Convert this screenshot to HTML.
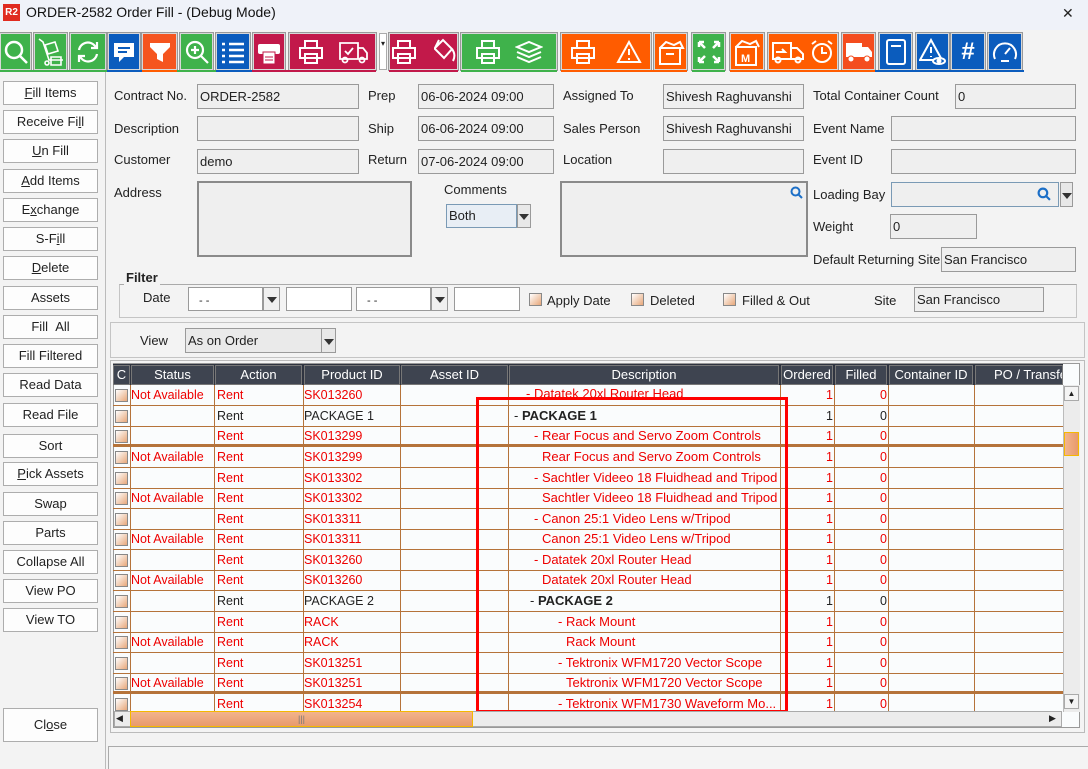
<!DOCTYPE html>
<html><head><meta charset="utf-8"><style>
*{margin:0;padding:0;box-sizing:border-box}
body{width:1088px;height:769px;overflow:hidden;background:#f3f3f3;font-family:"Liberation Sans",Arial,sans-serif;font-size:13px;color:#222;position:relative}
.a{position:absolute}
.tb{position:absolute;top:33px;height:37px;border:1px solid #d8d8d8;outline:1px solid #999;display:flex;align-items:center;justify-content:center;gap:8px}
.g{background:#3fb24b}.b{background:#0b5cbd}.o{background:#ff5c00}.r{background:#c2194a}
.lb{position:absolute;left:3px;width:95px;height:24px;border:1px solid #adadad;background:#fdfdfd;text-align:center;line-height:22px;font-size:13px}
.lbl{position:absolute;font-size:13px;color:#222}
.f{position:absolute;background:#efefef;border:1px solid #9a9a9a;padding-left:2px;line-height:24px;font-size:13px}
.w{position:absolute;background:#fff;border:1px solid #9a9a9a}
.cb{position:absolute;width:13px;height:13px;border:1px solid #888;background:linear-gradient(135deg,#fff,#e7a77a)}
.dd{position:absolute;background:#e8e8e8;border:1px solid #9a9a9a}
.dd:after{content:"";position:absolute;left:50%;top:50%;margin:-2px 0 0 -5px;border:5px solid transparent;border-top:6px solid #333;border-bottom:0}
.hd{position:absolute;top:365px;height:20px;background:#3e4450;color:#fff;border:1px solid #777;text-align:center;line-height:18px;font-size:13px}
.row{position:absolute;left:113px;width:950px;height:21px;border-bottom:1px solid #b5733a;font-size:12.5px;color:#e00}
.row span{position:absolute;top:3px;white-space:nowrap}
.row span.d{font-size:13px;top:2px}
.vl{position:absolute;top:385px;width:1px;height:327px;background:#b5733a}
svg{display:block}
</style></head><body>
<!-- title -->
<div class="a" style="left:0;top:0;width:1088px;height:30px;background:#eff2f9"></div>
<div class="a" style="left:3px;top:4px;width:17px;height:17px;background:#e02b20;color:#fff;font-size:10px;font-weight:bold;line-height:17px;text-align:center">R2</div>
<div class="a" style="left:26px;top:4px;font-size:14px;color:#111">ORDER-2582 Order Fill - (Debug Mode)</div>
<div class="a" style="left:1062px;top:5px;font-size:14px;color:#222">✕</div>

<!-- toolbar -->
<div class="tb g" style="left:0;width:31px"><svg width="26" height="26" viewBox="0 0 26 26" fill="none" stroke="#fff" stroke-width="2.5"><circle cx="11" cy="11" r="8"/><path d="M17 17l7 7"/></svg></div>
<div class="tb g" style="left:34px;width:33px"><svg width="28" height="30" viewBox="0 0 28 30" fill="none" stroke="#fff" stroke-width="1.6"><path d="M2 2l4 3 6 18h14M8 8l10-3 3 9-10 3zM14 20h10v8H14z"/><circle cx="10" cy="26" r="2"/></svg></div>
<div class="tb g" style="left:70px;width:36px"><svg width="26" height="26" viewBox="0 0 26 26" fill="none" stroke="#fff" stroke-width="2.2"><path d="M4 11a9 9 0 0 1 16-4l2 2M22 15a9 9 0 0 1-16 4l-2-2M22 3v6h-6M4 23v-6h6"/></svg></div>
<div class="tb b" style="left:108px;width:32px"><svg width="24" height="24" viewBox="0 0 24 24"><path d="M2 3h20v14H12l-5 5v-5H2z" fill="#fff"/><path d="M6 8h12M6 12h9" stroke="#0b5cbd" stroke-width="2"/></svg></div>
<div class="tb o" style="left:142px;width:35px;background:#f5551f"><svg width="24" height="24" viewBox="0 0 24 24"><path d="M2 3h20v4l-7 7v8l-6-3v-5L2 7z" fill="#fff"/></svg></div>
<div class="tb g" style="left:180px;width:33px"><svg width="26" height="26" viewBox="0 0 26 26" fill="none" stroke="#fff" stroke-width="2.2"><circle cx="11" cy="11" r="8"/><path d="M17 17l7 7M11 7v8M7 11h8"/></svg></div>
<div class="tb b" style="left:216px;width:34px"><svg width="26" height="24" viewBox="0 0 26 24" stroke="#fff" stroke-width="2.5"><path d="M2 4h3M9 4h15M2 10h3M9 10h15M2 16h3M9 16h15M2 22h3M9 22h15"/></svg></div>
<div class="tb r" style="left:253px;width:32px"><svg width="24" height="28" viewBox="0 0 24 28"><rect x="1" y="6" width="22" height="10" rx="2" fill="#fff"/><rect x="6" y="14" width="12" height="12" fill="#fff" stroke="#c2194a"/><path d="M8 19h8M8 22h8" stroke="#c2194a"/></svg></div>
<div class="tb r" style="left:289px;width:87px;gap:14px"><svg width="26" height="26" viewBox="0 0 26 26" fill="none" stroke="#fff" stroke-width="2"><path d="M7 9V2h12v7M2 9h22v10H2zM7 15h12v9H7z"/></svg><svg width="30" height="26" viewBox="0 0 30 26" fill="none" stroke="#fff" stroke-width="1.8"><path d="M2 4h18v16H2zM20 9h5l4 5v6h-9M7 12l3 3 5-6"/><circle cx="7" cy="21" r="2.5"/><circle cx="24" cy="21" r="2.5"/></svg></div>
<div class="a" style="left:379px;top:33px;width:8px;height:37px;background:#fff;border:1px solid #aaa;font-size:8px;text-align:center;line-height:20px">▾</div>
<div class="tb r" style="left:389px;width:69px;gap:14px"><svg width="26" height="26" viewBox="0 0 26 26" fill="none" stroke="#fff" stroke-width="2"><path d="M7 9V2h12v7M2 9h22v10H2zM7 15h12v9H7z"/></svg><svg width="26" height="28" viewBox="0 0 26 28" fill="none" stroke="#fff" stroke-width="2"><path d="M4 10l8-8 9 9-8 9-9-9zM8 2l-4 8M21 11c3 4 3 8 1 12"/></svg></div>
<div class="tb g" style="left:461px;width:96px;gap:14px"><svg width="26" height="26" viewBox="0 0 26 26" fill="none" stroke="#fff" stroke-width="2"><path d="M7 9V2h12v7M2 9h22v10H2zM7 15h12v9H7z"/></svg><svg width="28" height="26" viewBox="0 0 28 26" fill="none" stroke="#fff" stroke-width="2"><path d="M2 8l12-5 12 5-12 5zM2 13l12 5 12-5M2 18l12 5 12-5"/></svg></div>
<div class="tb o" style="left:561px;width:90px;gap:20px"><svg width="26" height="26" viewBox="0 0 26 26" fill="none" stroke="#fff" stroke-width="2"><path d="M7 9V2h12v7M2 9h22v10H2zM7 15h12v9H7z"/></svg><svg width="26" height="24" viewBox="0 0 26 24" fill="none" stroke="#fff" stroke-width="2"><path d="M13 2l11 20H2zM13 9v6M13 18v2"/></svg></div>
<div class="tb o" style="left:654px;width:33px"><svg width="28" height="28" viewBox="0 0 28 28" fill="none" stroke="#fff" stroke-width="2"><path d="M3 10h20v16H3zM3 10l6-6 8 3 6-3 3 6-3 0M9 16h8"/></svg></div>
<div class="tb g" style="left:692px;width:33px"><svg width="24" height="24" viewBox="0 0 24 24" fill="none" stroke="#fff" stroke-width="2.5"><path d="M2 2l6 6M22 2l-6 6M2 22l6-6M22 22l-6-6M2 2h5M2 2v5M22 2h-5M22 2v5M2 22h5M2 22v-5M22 22h-5M22 22v-5"/></svg></div>
<div class="tb o" style="left:730px;width:34px"><svg width="28" height="30" viewBox="0 0 28 30" fill="none" stroke="#fff" stroke-width="2"><path d="M3 10h20v18H3zM3 10l6-6 8 3 6-3 3 6"/><text x="8" y="25" fill="#fff" stroke="none" font-size="11" font-weight="bold" font-family="Liberation Sans">M</text></svg></div>
<div class="tb o" style="left:768px;width:70px;gap:4px"><svg width="34" height="26" viewBox="0 0 34 26" fill="none" stroke="#fff" stroke-width="2"><path d="M2 4h18v16H2zM20 9h6l6 6v5H20M5 13h9l-3-3"/><circle cx="7" cy="21" r="2.5"/><circle cx="27" cy="21" r="2.5"/></svg><svg width="26" height="26" viewBox="0 0 26 26" fill="none" stroke="#fff" stroke-width="2"><circle cx="13" cy="14" r="9"/><path d="M13 8v6h5M3 5l4-3M23 5l-4-3"/></svg></div>
<div class="tb" style="left:842px;width:33px;background:#f44d1e"><svg width="28" height="22" viewBox="0 0 28 22"><path d="M1 2h16v14H1zM17 6h6l4 5v5H17z" fill="#fff"/><circle cx="6" cy="18" r="3" fill="#fff" stroke="#f44d1e"/><circle cx="22" cy="18" r="3" fill="#fff" stroke="#f44d1e"/></svg></div>
<div class="tb b" style="left:879px;width:33px"><svg width="22" height="28" viewBox="0 0 22 28" fill="none" stroke="#fff" stroke-width="2"><rect x="2" y="2" width="18" height="24" rx="2"/><path d="M6 8h10"/></svg></div>
<div class="tb b" style="left:916px;width:33px"><svg width="28" height="28" viewBox="0 0 28 28" fill="none" stroke="#fff" stroke-width="2"><path d="M12 2l11 20H1zM12 9v6M12 18v1"/><ellipse cx="20" cy="23" rx="6" ry="3" fill="#0b5cbd"/><circle cx="20" cy="23" r="1.5" fill="#fff"/></svg></div>
<div class="tb b" style="left:951px;width:34px;color:#fff;font-size:24px;font-weight:bold">#</div>
<div class="tb b" style="left:988px;width:34px"><svg width="28" height="26" viewBox="0 0 28 26" fill="none" stroke="#fff" stroke-width="2"><path d="M4 20a11 11 0 1 1 20 0M14 15l5-6M10 22h8"/></svg></div>
<div class="a" style="left:0;top:70px;width:1024px;height:2px;background:linear-gradient(90deg,#3fb24b 0 107px,#0b5cbd 107px 142px,#ff5c00 142px 177px,#3fb24b 177px 216px,#0b5cbd 216px 252px,#c2194a 252px 376px,transparent 376px 389px,#c2194a 389px 458px,transparent 458px 461px,#3fb24b 461px 557px,transparent 557px 561px,#ff5c00 561px 687px,transparent 687px 692px,#3fb24b 692px 725px,transparent 725px 730px,#ff5c00 730px 875px,#0b5cbd 875px 1024px)"></div>

<!-- left buttons -->
<div class="a" style="left:105px;top:72px;width:1px;height:697px;background:#bbb"></div>
<div class="lb" style="top:81px"><u>F</u>ill Items</div>
<div class="lb" style="top:110px">Receive Fi<u>l</u>l</div>
<div class="lb" style="top:139px"><u>U</u>n Fill</div>
<div class="lb" style="top:169px"><u>A</u>dd Items</div>
<div class="lb" style="top:198px">E<u>x</u>change</div>
<div class="lb" style="top:227px">S-F<u>i</u>ll</div>
<div class="lb" style="top:256px"><u>D</u>elete</div>
<div class="lb" style="top:286px">Assets</div>
<div class="lb" style="top:315px">Fill &nbsp;All</div>
<div class="lb" style="top:344px">Fill Filtered</div>
<div class="lb" style="top:373px">Read Data</div>
<div class="lb" style="top:403px">Read File</div>
<div class="lb" style="top:434px">Sort</div>
<div class="lb" style="top:462px"><u>P</u>ick Assets</div>
<div class="lb" style="top:492px">Swap</div>
<div class="lb" style="top:521px">Parts</div>
<div class="lb" style="top:550px">Collapse All</div>
<div class="lb" style="top:579px">View PO</div>
<div class="lb" style="top:608px">View TO</div>
<div class="lb" style="top:708px;height:34px;line-height:32px">Cl<u>o</u>se</div>

<!-- form -->
<div class="lbl" style="left:114px;top:88px">Contract No.</div>
<div class="f" style="left:197px;top:84px;width:162px;height:25px">ORDER-2582</div>
<div class="lbl" style="left:114px;top:121px">Description</div>
<div class="f" style="left:197px;top:116px;width:162px;height:25px"></div>
<div class="lbl" style="left:114px;top:152px">Customer</div>
<div class="f" style="left:197px;top:149px;width:162px;height:25px">demo</div>
<div class="lbl" style="left:114px;top:185px">Address</div>
<div class="f" style="left:197px;top:181px;width:215px;height:76px;border:2px solid #8a8a8a"></div>
<div class="lbl" style="left:368px;top:88px">Prep</div>
<div class="f" style="left:418px;top:84px;width:136px;height:25px">06-06-2024 09:00</div>
<div class="lbl" style="left:368px;top:121px">Ship</div>
<div class="f" style="left:418px;top:116px;width:136px;height:25px">06-06-2024 09:00</div>
<div class="lbl" style="left:368px;top:152px">Return</div>
<div class="f" style="left:418px;top:149px;width:136px;height:25px">07-06-2024 09:00</div>
<div class="lbl" style="left:444px;top:182px">Comments</div>
<div class="f" style="left:446px;top:204px;width:71px;height:24px;background:#e8eef5;border-color:#7a9ab5;line-height:22px">Both</div>
<div class="dd" style="left:517px;top:204px;width:14px;height:24px"></div>
<div class="f" style="left:560px;top:181px;width:248px;height:76px;border:2px solid #8a8a8a"></div>
<svg class="a" style="left:790px;top:186px" width="13" height="13" viewBox="0 0 13 13" fill="none" stroke="#1c6fc7" stroke-width="2"><circle cx="5.5" cy="5.5" r="4"/><path d="M8.5 8.5l3.5 3.5"/></svg>
<div class="lbl" style="left:563px;top:88px">Assigned To</div>
<div class="f" style="left:663px;top:84px;width:141px;height:25px">Shivesh Raghuvanshi</div>
<div class="lbl" style="left:563px;top:121px">Sales Person</div>
<div class="f" style="left:663px;top:116px;width:141px;height:25px">Shivesh Raghuvanshi</div>
<div class="lbl" style="left:563px;top:152px">Location</div>
<div class="f" style="left:663px;top:149px;width:141px;height:25px"></div>
<div class="lbl" style="left:813px;top:88px">Total Container Count</div>
<div class="f" style="left:955px;top:84px;width:121px;height:25px">0</div>
<div class="lbl" style="left:813px;top:121px">Event Name</div>
<div class="f" style="left:891px;top:116px;width:185px;height:25px"></div>
<div class="lbl" style="left:813px;top:152px">Event ID</div>
<div class="f" style="left:891px;top:149px;width:185px;height:25px"></div>
<div class="lbl" style="left:813px;top:187px">Loading Bay</div>
<div class="f" style="left:891px;top:182px;width:168px;height:25px;border-color:#7a9ab5"></div>
<svg class="a" style="left:1037px;top:187px" width="14" height="14" viewBox="0 0 13 13" fill="none" stroke="#1c6fc7" stroke-width="2"><circle cx="5.5" cy="5.5" r="4"/><path d="M8.5 8.5l3.5 3.5"/></svg>
<div class="dd" style="left:1060px;top:182px;width:13px;height:25px"></div>
<div class="lbl" style="left:813px;top:219px">Weight</div>
<div class="f" style="left:890px;top:214px;width:87px;height:25px">0</div>
<div class="lbl" style="left:813px;top:252px">Default Returning Site</div>
<div class="f" style="left:941px;top:247px;width:135px;height:25px">San Francisco</div>

<!-- filter -->
<div class="a" style="left:119px;top:284px;width:958px;height:34px;border:1px solid #c4c4c4;border-top:1px solid #aaa"></div>
<div class="a" style="left:124px;top:270px;padding:0 2px;background:#f3f3f3;font-weight:bold;font-size:13px">Filter</div>
<div class="lbl" style="left:143px;top:290px">Date</div>
<div class="w" style="left:188px;top:287px;width:75px;height:24px;padding:7px 0 0 10px;font-size:11px">- -</div>
<div class="dd" style="left:263px;top:287px;width:17px;height:24px;background:#f0f0f0"></div>
<div class="w" style="left:286px;top:287px;width:66px;height:24px"></div>
<div class="w" style="left:356px;top:287px;width:75px;height:24px;padding:7px 0 0 10px;font-size:11px">- -</div>
<div class="dd" style="left:431px;top:287px;width:17px;height:24px;background:#f0f0f0"></div>
<div class="w" style="left:454px;top:287px;width:66px;height:24px"></div>
<div class="cb" style="left:529px;top:293px"></div><div class="lbl" style="left:547px;top:293px">Apply Date</div>
<div class="cb" style="left:631px;top:293px"></div><div class="lbl" style="left:650px;top:293px">Deleted</div>
<div class="cb" style="left:723px;top:293px"></div><div class="lbl" style="left:742px;top:293px">Filled &amp; Out</div>
<div class="lbl" style="left:874px;top:293px">Site</div>
<div class="f" style="left:914px;top:287px;width:130px;height:25px">San Francisco</div>

<!-- view -->
<div class="a" style="left:110px;top:322px;width:975px;height:36px;border:1px solid #c4c4c4"></div>
<div class="lbl" style="left:140px;top:333px">View</div>
<div class="f" style="left:185px;top:328px;width:137px;height:25px;background:#eaeaea">As on Order</div>
<div class="dd" style="left:321px;top:328px;width:15px;height:25px"></div>

<!-- grid -->
<div class="a" style="left:110px;top:360px;width:975px;height:373px;border:1px solid #bbb;background:#f4f4f4"></div>
<div class="a" style="left:113px;top:363px;width:967px;height:365px;border:1px solid #999;background:#fafcfd"></div>
<div class="a" style="left:113px;top:364px;width:950px;height:21px;background:#2f3440"></div>
<div class="hd" style="left:113px;width:17px">C</div>
<div class="hd" style="left:131px;width:83px">Status</div>
<div class="hd" style="left:215px;width:87px">Action</div>
<div class="hd" style="left:304px;width:96px">Product ID</div>
<div class="hd" style="left:401px;width:107px">Asset ID</div>
<div class="hd" style="left:509px;width:270px">Description</div>
<div class="hd" style="left:781px;width:52px">Ordered</div>
<div class="hd" style="left:835px;width:52px">Filled</div>
<div class="hd" style="left:889px;width:84px">Container ID</div>
<div class="hd" style="left:975px;width:88px;text-align:left;padding-left:18px;overflow:hidden;white-space:nowrap">PO / Transfer</div>

<div class="vl" style="left:130px"></div><div class="vl" style="left:214px"></div><div class="vl" style="left:303px"></div><div class="vl" style="left:400px"></div><div class="vl" style="left:508px"></div><div class="vl" style="left:780px"></div><div class="vl" style="left:834px"></div><div class="vl" style="left:888px"></div><div class="vl" style="left:974px"></div>

<div class="row" style="top:385px"><div class="cb" style="left:2px;top:4px"></div><span style="left:18px">Not Available</span><span style="left:104px">Rent</span><span style="left:191px">SK013260</span><span class="d" style="left:413px;top:1px">- Datatek 20xl Router Head</span><span style="left:713px">1</span><span style="left:767px">0</span></div>
<div class="row" style="top:406px;color:#222"><div class="cb" style="left:2px;top:4px"></div><span style="left:104px">Rent</span><span style="left:191px">PACKAGE 1</span><span class="d" style="left:401px">- <b>PACKAGE 1</b></span><span style="left:713px">1</span><span style="left:767px">0</span></div>
<div class="row" style="top:426px;border-bottom:3px solid #b5733a"><div class="cb" style="left:2px;top:4px"></div><span style="left:104px">Rent</span><span style="left:191px">SK013299</span><span class="d" style="left:421px">- Rear Focus and Servo Zoom Controls</span><span style="left:713px">1</span><span style="left:767px">0</span></div>
<div class="row" style="top:447px"><div class="cb" style="left:2px;top:4px"></div><span style="left:18px">Not Available</span><span style="left:104px">Rent</span><span style="left:191px">SK013299</span><span class="d" style="left:429px">Rear Focus and Servo Zoom Controls</span><span style="left:713px">1</span><span style="left:767px">0</span></div>
<div class="row" style="top:468px"><div class="cb" style="left:2px;top:4px"></div><span style="left:104px">Rent</span><span style="left:191px">SK013302</span><span class="d" style="left:421px">- Sachtler Videeo 18 Fluidhead and Tripod</span><span style="left:713px">1</span><span style="left:767px">0</span></div>
<div class="row" style="top:488px"><div class="cb" style="left:2px;top:4px"></div><span style="left:18px">Not Available</span><span style="left:104px">Rent</span><span style="left:191px">SK013302</span><span class="d" style="left:429px">Sachtler Videeo 18 Fluidhead and Tripod</span><span style="left:713px">1</span><span style="left:767px">0</span></div>
<div class="row" style="top:509px"><div class="cb" style="left:2px;top:4px"></div><span style="left:104px">Rent</span><span style="left:191px">SK013311</span><span class="d" style="left:421px">- Canon 25:1 Video Lens w/Tripod</span><span style="left:713px">1</span><span style="left:767px">0</span></div>
<div class="row" style="top:529px"><div class="cb" style="left:2px;top:4px"></div><span style="left:18px">Not Available</span><span style="left:104px">Rent</span><span style="left:191px">SK013311</span><span class="d" style="left:429px">Canon 25:1 Video Lens w/Tripod</span><span style="left:713px">1</span><span style="left:767px">0</span></div>
<div class="row" style="top:550px"><div class="cb" style="left:2px;top:4px"></div><span style="left:104px">Rent</span><span style="left:191px">SK013260</span><span class="d" style="left:421px">- Datatek 20xl Router Head</span><span style="left:713px">1</span><span style="left:767px">0</span></div>
<div class="row" style="top:570px"><div class="cb" style="left:2px;top:4px"></div><span style="left:18px">Not Available</span><span style="left:104px">Rent</span><span style="left:191px">SK013260</span><span class="d" style="left:429px">Datatek 20xl Router Head</span><span style="left:713px">1</span><span style="left:767px">0</span></div>
<div class="row" style="top:591px;color:#222"><div class="cb" style="left:2px;top:4px"></div><span style="left:104px">Rent</span><span style="left:191px">PACKAGE 2</span><span class="d" style="left:417px">- <b>PACKAGE 2</b></span><span style="left:713px">1</span><span style="left:767px">0</span></div>
<div class="row" style="top:612px"><div class="cb" style="left:2px;top:4px"></div><span style="left:104px">Rent</span><span style="left:191px">RACK</span><span class="d" style="left:445px">- Rack Mount</span><span style="left:713px">1</span><span style="left:767px">0</span></div>
<div class="row" style="top:632px"><div class="cb" style="left:2px;top:4px"></div><span style="left:18px">Not Available</span><span style="left:104px">Rent</span><span style="left:191px">RACK</span><span class="d" style="left:453px">Rack Mount</span><span style="left:713px">1</span><span style="left:767px">0</span></div>
<div class="row" style="top:653px"><div class="cb" style="left:2px;top:4px"></div><span style="left:104px">Rent</span><span style="left:191px">SK013251</span><span class="d" style="left:445px">- Tektronix WFM1720 Vector Scope</span><span style="left:713px">1</span><span style="left:767px">0</span></div>
<div class="row" style="top:673px;border-bottom:3px solid #b5733a"><div class="cb" style="left:2px;top:4px"></div><span style="left:18px">Not Available</span><span style="left:104px">Rent</span><span style="left:191px">SK013251</span><span class="d" style="left:453px">Tektronix WFM1720 Vector Scope</span><span style="left:713px">1</span><span style="left:767px">0</span></div>
<div class="row" style="top:694px;height:18px;border:0;overflow:hidden"><div class="cb" style="left:2px;top:4px"></div><span style="left:104px">Rent</span><span style="left:191px">SK013254</span><span class="d" style="left:445px">- Tektronix WFM1730 Waveform Mo...</span><span style="left:713px">1</span><span style="left:767px">0</span></div>

<!-- red box -->
<div class="a" style="left:476px;top:397px;width:312px;height:316px;border:3px solid #f00"></div>

<!-- vscroll -->
<div class="a" style="left:1063px;top:385px;width:17px;height:327px;background:#ececec;border-left:1px solid #bbb"></div>
<div class="a" style="left:1064px;top:386px;width:15px;height:15px;background:#f4f4f4;border:1px solid #aaa;font-size:8px;text-align:center;line-height:13px">▲</div>
<div class="a" style="left:1064px;top:432px;width:15px;height:24px;background:linear-gradient(90deg,#f2b48d,#e89a6c);border:1px solid #f5b800"></div>
<div class="a" style="left:1064px;top:694px;width:15px;height:15px;background:#f4f4f4;border:1px solid #aaa;font-size:8px;text-align:center;line-height:13px">▼</div>
<!-- hscroll -->
<div class="a" style="left:114px;top:711px;width:948px;height:16px;background:#ececec;border:1px solid #aaa"></div>
<div class="a" style="left:116px;top:713px;font-size:9px">◀</div>
<div class="a" style="left:130px;top:711px;width:343px;height:16px;background:linear-gradient(#f2b48d,#e89a6c);border:1px solid #f5b800;text-align:center;font-size:9px;line-height:14px;color:#777">|||</div>
<div class="a" style="left:1049px;top:713px;font-size:9px">▶</div>

<!-- status bar -->
<div class="a" style="left:108px;top:746px;width:980px;height:23px;border:1px solid #aaa;border-right:0;border-bottom:0;background:#f4f4f4"></div>
</body></html>
